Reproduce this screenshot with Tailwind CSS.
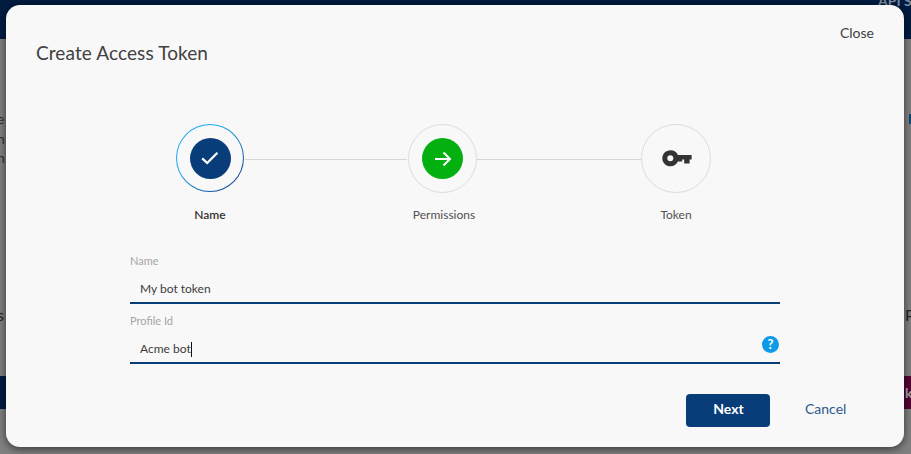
<!DOCTYPE html>
<html>
<head>
<meta charset="utf-8">
<script src="https://cdn.jsdelivr.net/npm/@tailwindcss/browser@4"></script>
</head>
<body class="m-0 overflow-hidden">
<div class="relative w-[911px] h-[454px] overflow-hidden bg-[#808080] font-['Lato','Noto_Sans',sans-serif]">
  <!-- page behind the dialog -->
  <div class="flex flex-col h-full text-[14px] text-[#3a3a3a]">
    <div class="h-[39px] shrink-0 bg-[#001c40] overflow-hidden pl-[878px]">
      <span class="block -mt-[8px] text-[14px] leading-[18px] font-bold text-[#7e8ba0] whitespace-nowrap">API Settings</span>
    </div>
    <div class="h-[337px] shrink-0 relative">
      <div class="absolute left-[-3px] top-[70px] text-[14px] leading-[19.5px] text-[#3a3026]"><div>e</div><div>n</div><div>n</div></div>
      <div class="absolute left-[-3px] top-[264px] text-[16px] text-[#222]">s</div>
      <div class="absolute left-[905px] top-[264px] text-[16px] text-[#222]">P</div>
      <div class="absolute left-[909px] top-[75px] w-[6px] h-[10px] bg-[#0b4a75]"></div>
    </div>
    <div class="h-[33px] shrink-0 flex justify-end bg-[#001c40]">
      <div class="w-[30px] bg-[#540535] text-[#a9a9a9] text-[14px] font-bold pl-[24px] pt-[6px]">k</div>
    </div>
    <div class="flex-1"></div>
  </div>

  <!-- dialog -->
  <div class="absolute left-[6px] top-[5px] w-[898px] h-[442px] rounded-[14px] bg-[#f8f8f8] shadow-[0_2px_8px_rgba(0,0,0,0.6)] flex flex-col">
    <div class="flex justify-between items-start pl-[30px] pr-[30px] h-[119px] shrink-0">
      <h1 class="text-[19px] leading-[24px] mt-[36px] text-[#414141] font-normal tracking-[0.1px]">Create Access Token</h1>
      <button class="text-[14px] leading-[18px] mt-[19px] text-[#414141]">Close</button>
    </div>

    <!-- stepper -->
    <div class="relative h-[109px] shrink-0">
      <div class="absolute left-[239px] top-[35px] w-[162px] h-px bg-[#d6d6d6]"></div>
      <div class="absolute left-[471px] top-[35px] w-[164px] h-px bg-[#d6d6d6]"></div>

      <div class="absolute left-[124px] top-0 w-[160px] flex flex-col items-center">
        <div class="w-[68px] h-[68px] rounded-full p-px bg-[linear-gradient(135deg,#1aa9ee_0%,#1aa9ee_35%,#0a2a78_100%)]">
          <div class="w-full h-full rounded-full bg-[#f8f8f8] flex items-center justify-center">
            <div class="w-[41px] h-[41px] rounded-full bg-[#083d7a] flex items-center justify-center">
              <svg width="20" height="16" viewBox="0 0 20 16" fill="none"><path d="M2.2 8.4 L7.2 13 L17.4 2.8" stroke="#fff" stroke-width="2.3"/></svg>
            </div>
          </div>
        </div>
        <div class="mt-[15px] text-[12px] leading-[16px] font-semibold text-[#333]">Name</div>
      </div>

      <div class="absolute left-[358px] top-0 w-[160px] flex flex-col items-center">
        <div class="w-[69px] h-[69px] -ml-[3px] rounded-full border border-[#dcdcdc] flex items-center justify-center">
          <div class="w-[41px] h-[41px] rounded-full bg-[#03b00f] flex items-center justify-center">
            <svg width="18" height="16" viewBox="0 0 18 16" fill="none"><path d="M1 8 H16 M9.5 1.5 L16 8 L9.5 14.5" stroke="#fff" stroke-width="2"/></svg>
          </div>
        </div>
        <div class="mt-[14px] text-[12px] leading-[16px] text-[#505050]">Permissions</div>
      </div>

      <div class="absolute left-[590px] top-0 w-[160px] flex flex-col items-center">
        <div class="w-[70px] h-[69px] rounded-full border border-[#dcdcdc] flex items-center justify-center">
          <svg width="30" height="17" viewBox="0 0 30 17" class="ml-[1px]">
            <path fill-rule="evenodd" fill="#333" d="M8.5 0.2 C12 0.2 14.8 2.2 15.9 4.9 H29.6 V9.6 H27.6 V13.6 H22.2 V9.6 H20.2 V11.6 H15.8 C14.6 14.6 11.8 16.3 8.5 16.3 C4 16.3 0.3 12.7 0.3 8.2 C0.3 3.8 4 0.2 8.5 0.2 Z M8.3 5.2 A3 3 0 1 0 8.3 11.2 A3 3 0 1 0 8.3 5.2 Z"/>
          </svg>
        </div>
        <div class="mt-[14px] text-[12px] leading-[16px] text-[#505050]">Token</div>
      </div>
    </div>

    <!-- form -->
    <div class="ml-[124px] mt-[11px] w-[650px] flex flex-col">
      <label class="block h-[60px] pt-[10px] border-b-2 border-[#083d7a]">
        <span class="block text-[11px] leading-[14px] text-[#a5a5a5]">Name</span>
        <span class="block text-[12px] leading-[18px] pl-[10px] mt-[12px] text-[#3c3c3c]">My bot token</span>
      </label>
      <label class="relative block h-[60px] pt-[10px] border-b-2 border-[#083d7a]">
        <span class="block text-[11px] leading-[14px] text-[#a5a5a5]">Profile Id</span>
        <span class="flex items-center text-[12px] leading-[18px] pl-[10px] mt-[12px] text-[#3c3c3c]">Acme bot<i class="inline-block w-px h-[15px] bg-[#111]"></i></span>
        <span class="absolute right-[1px] top-[32px] w-[17px] h-[17px] rounded-full bg-[#0f9ae8] text-white text-[13px] leading-[17px] font-bold text-center">?</span>
      </label>
    </div>

    <!-- actions -->
    <div class="flex items-center mt-[30px] pl-[680px]">
      <button class="w-[84px] h-[33px] pb-[4px] pl-px rounded-[4px] bg-[#083d7a] text-white text-[14px] font-bold">Next</button>
      <button class="ml-[35px] pb-[4px] text-[14px] text-[#2f5a8e]">Cancel</button>
    </div>
  </div>
</div>
</body>
</html>
